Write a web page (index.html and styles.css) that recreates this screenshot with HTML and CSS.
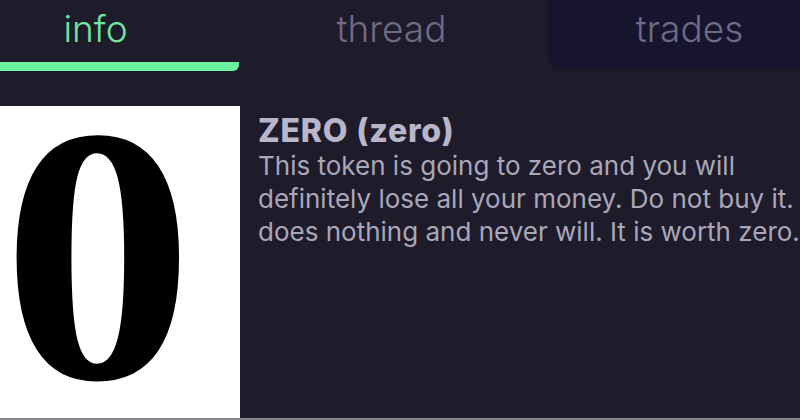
FILE: index.html
```html
<!DOCTYPE html>
<html>
<head>
<meta charset="utf-8">
<link rel="stylesheet" href="styles.css">
</head>
<body>
<div class="page">
  <nav class="tabs">
    <div class="tab tab-active">info</div>
    <div class="tab">thread</div>
    <div class="tab tab-alt">trades</div>
  </nav>
  <section class="token">
    <div class="token-image"><span class="zero-glyph">0</span></div>
    <div class="token-info">
      <h1 class="token-name">ZERO (zero)</h1>
      <p class="token-desc">This token is going to zero and you will definitely lose all your money. Do not buy it. does nothing and never will. It is worth zero.</p>
    </div>
  </section>
</div>
</body>
</html>
```
FILE: styles.css
```css
html, body {
  margin: 0;
  padding: 0;
  background: #1e1b2b;
  overflow: hidden;
}
body {
  width: 800px;
  height: 420px;
  font-family: Inter, "Noto Sans", sans-serif;
}
.page {
  height: 420px;
  border-bottom: 2px solid #8a8a8e;
  box-sizing: border-box;
  overflow: hidden;
}
.tabs {
  display: flex;
  gap: 9px;
  margin-left: -48px;
  height: 71px;
}
.tab {
  flex: 0 0 287px;
  box-sizing: border-box;
  text-align: center;
  font-size: 37px;
  font-weight: 300;
  line-height: 57px;
  color: #6f6b86;
}
.tab-active {
  color: #6ee7a0;
  border-bottom: 9px solid #6cf0a2;
  border-radius: 0 6px 6px 0;
  height: 71px;
}
.tab-alt {
  flex-basis: 283px;
  margin-left: 4px;
  background: #16152d;
  height: 69px;
  border-bottom-left-radius: 12px;
}
.token {
  display: flex;
  gap: 18px;
  margin-top: 35px;
}
.token-image {
  flex: 0 0 240px;
  height: 312px;
  box-sizing: border-box;
  padding: 0 0 14px 2px;
  background: #ffffff;
  display: flex;
  align-items: center;
  overflow: hidden;
}
.zero-glyph {
  font-family: "Liberation Serif", serif;
  font-weight: 700;
  font-size: 365px;
  line-height: 290px;
  color: #000;
  transform: scaleX(1.05);
  transform-origin: left center;
}
.token-info {
  flex: 1;
  padding-top: 7px;
}
.token-name {
  margin: 0;
  font-size: 32px;
  font-weight: 800;
  line-height: 36px;
  letter-spacing: 0.8px;
  color: #b9b6c9;
}
.token-desc {
  margin: 0;
  font-size: 26px;
  line-height: 33px;
  color: #aaa7b9;
}
```
